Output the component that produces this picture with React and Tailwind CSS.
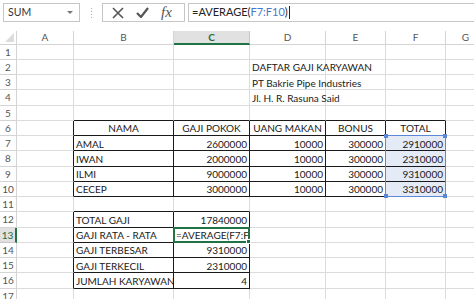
import React from "react";

const COLS = ["A", "B", "C", "D", "E", "F", "G"];
const COLW = [57, 100, 76, 76, 60, 60, 40];
const ROWH = 15.25;

const data = {
  "2-3": { t: "DAFTAR GAJI KARYAWAN" },
  "3-3": { t: "PT Bakrie Pipe Industries" },
  "4-3": { t: "Jl. H. R. Rasuna Said" },
  "6-1": { t: "NAMA", a: "c" },
  "6-2": { t: "GAJI POKOK", a: "c" },
  "6-3": { t: "UANG MAKAN", a: "c" },
  "6-4": { t: "BONUS", a: "c" },
  "6-5": { t: "TOTAL", a: "c" },
  "7-1": { t: "AMAL" }, "7-2": { t: "2600000", a: "r" }, "7-3": { t: "10000", a: "r" }, "7-4": { t: "300000", a: "r" }, "7-5": { t: "2910000", a: "r" },
  "8-1": { t: "IWAN" }, "8-2": { t: "2000000", a: "r" }, "8-3": { t: "10000", a: "r" }, "8-4": { t: "300000", a: "r" }, "8-5": { t: "2310000", a: "r" },
  "9-1": { t: "ILMI" }, "9-2": { t: "9000000", a: "r" }, "9-3": { t: "10000", a: "r" }, "9-4": { t: "300000", a: "r" }, "9-5": { t: "9310000", a: "r" },
  "10-1": { t: "CECEP" }, "10-2": { t: "3000000", a: "r" }, "10-3": { t: "10000", a: "r" }, "10-4": { t: "300000", a: "r" }, "10-5": { t: "3310000", a: "r" },
  "12-1": { t: "TOTAL GAJI" }, "12-2": { t: "17840000", a: "r" },
  "13-1": { t: "GAJI RATA - RATA" }, "13-2": { t: "=AVERAGE(F7:F", a: "l" },
  "14-1": { t: "GAJI TERBESAR" }, "14-2": { t: "9310000", a: "r" },
  "15-1": { t: "GAJI TERKECIL" }, "15-2": { t: "2310000", a: "r" },
  "16-1": { t: "JUMLAH KARYAWAN" }, "16-2": { t: "4", a: "r" },
};

function inTable(r, c) {
  if (r >= 6 && r <= 10 && c >= 1 && c <= 5) return true;
  if (r >= 12 && r <= 16 && c >= 1 && c <= 2) return true;
  return false;
}

const font = { fontFamily: "Lato, 'Open Sans', sans-serif" };

export default function App() {
  const rows = [];
  for (let r = 1; r <= 17; r++) rows.push(r);

  return (
    <div className="w-[474px] h-[299px] overflow-hidden bg-white relative text-[10px] text-[#222]" style={font}>
      {/* toolbar */}
      <div className="h-[31px] flex items-start pt-[3px] pl-[3px] bg-white">
        <div className="w-[77px] h-[19px] border border-[#c6c6c6] flex items-center justify-between pl-[4px] pr-[6px]">
          <span className="text-[10.5px] text-[#333]">SUM</span>
          <span className="w-0 h-0 border-l-[3px] border-r-[3px] border-t-[3px] border-l-transparent border-r-transparent border-t-[#777]" />
        </div>
        <div className="w-[22px] h-[19px] flex flex-col items-center justify-center gap-[2px]">
          <span className="w-[1px] h-[1px] bg-[#aaa]" />
          <span className="w-[1px] h-[1px] bg-[#aaa]" />
          <span className="w-[1px] h-[1px] bg-[#aaa]" />
          <span className="w-[1px] h-[1px] bg-[#aaa]" />
        </div>
        <div className="w-[83px] h-[19px] border border-[#c6c6c6] flex items-center pl-[9px] gap-[12px]">
          <svg width="12" height="12" viewBox="0 0 12 12">
            <path d="M1 1 L11 11 M11 1 L1 11" stroke="#555" strokeWidth="1.6" fill="none" />
          </svg>
          <svg width="13" height="11" viewBox="0 0 13 11">
            <path d="M1 6 L5 10 L12 1" stroke="#555" strokeWidth="2.2" fill="none" />
          </svg>
          <span className="text-[15px] italic text-[#555] leading-none" style={{ fontFamily: "'Liberation Serif', serif" }}>fx</span>
        </div>
        <div className="ml-[3px] flex-1 h-[19px] border border-[#c6c6c6] border-r-0 flex items-center pl-[3px]">
          <span className="text-[11px] text-[#222]">=AVERAGE(</span>
          <span className="text-[11px] text-[#4a78c8]">F7:F10</span>
          <span className="text-[11px] text-[#222]">)</span>
          <span className="w-[1px] h-[13px] bg-[#222] ml-[1px]" />
        </div>
      </div>

      {/* grid */}
      <div
        className="grid relative"
        style={{
          gridTemplateColumns: `17px ${COLW.map((w) => w + "px").join(" ")}`,
          gridTemplateRows: `13.5px repeat(17, ${ROWH}px)`,
        }}
      >
        {/* corner */}
        <div className="border-r border-b border-[#d4d4d4] bg-white relative">
          <svg className="absolute right-[2px] bottom-[2px]" width="9" height="9" viewBox="0 0 9 9"><path d="M9 0 L9 9 L0 9 Z" fill="#dcdcdc" /></svg>
        </div>
        {COLS.map((c) => (
          <div
            key={c}
            className={
              c === "C"
                ? "bg-[#e1e1e1] border-r border-[#c6c6c6] border-b-2 border-b-[#217346] text-[#1e6b41] font-bold flex items-center justify-center leading-none"
                : "bg-white border-r border-b border-[#d4d4d4] text-[#555] flex items-center justify-center leading-none"
            }
          >
            {c}
          </div>
        ))}
        {rows.map((r) => (
          <React.Fragment key={r}>
            <div
              className={
                r === 13
                  ? "bg-[#e1e1e1] border-r-2 border-r-[#217346] border-b border-[#c6c6c6] text-[#1e6b41] flex items-center justify-center leading-none"
                  : "bg-white border-r border-b border-[#d4d4d4] text-[#555] flex items-center justify-center leading-none"
              }
            >
              {r}
            </div>
            {COLS.map((c, col) => {
              const key = `${r}-${col}`;
              const d = data[key];
              const rightBlack = inTable(r, col) || inTable(r, col + 1);
              const bottomBlack = inTable(r, col) || inTable(r + 1, col);
              const sel = col === 5 && r >= 7 && r <= 10;
              const overflow = col === 3 && r >= 2 && r <= 4;
              const cls = [
                "border-r border-b flex items-center pl-[2px] pr-[2px] pt-[1px] leading-none whitespace-nowrap",
                rightBlack ? "border-r-[#1a1a1a]" : "border-r-[#dcdcdc]",
                bottomBlack ? "border-b-[#1a1a1a]" : "border-b-[#dcdcdc]",
                sel ? "bg-[#e4eaf6]" : "",
                overflow ? "overflow-visible relative z-10" : "overflow-hidden",
                d && d.a === "r" ? "justify-end" : d && d.a === "c" ? "justify-center" : "justify-start",
              ].join(" ");
              return (
                <div key={key} className={cls}>
                  {d ? <span className="text-[#1a1a1a]">{d.t}</span> : null}
                </div>
              );
            })}
          </React.Fragment>
        ))}

        {/* F7:F10 reference highlight */}
        <div
          className="absolute border border-[#5b87d6] pointer-events-none"
          style={{ left: 17 + 57 + 100 + 76 + 76 + 60 - 1, top: 13.5 + ROWH * 6 - 1, width: 61, height: ROWH * 4 + 1 }}
        >
          <span className="absolute -left-[2px] -top-[2px] w-[4px] h-[4px] bg-[#5b87d6]" />
          <span className="absolute -right-[2px] -top-[2px] w-[4px] h-[4px] bg-[#5b87d6]" />
          <span className="absolute -left-[2px] -bottom-[2px] w-[4px] h-[4px] bg-[#5b87d6]" />
          <span className="absolute -right-[2px] -bottom-[2px] w-[4px] h-[4px] bg-[#5b87d6]" />
        </div>

        {/* active cell C13 */}
        <div
          className="absolute border-2 border-[#217346] pointer-events-none"
          style={{ left: 17 + 57 + 100 - 1, top: 13.5 + ROWH * 12 - 1, width: 77, height: ROWH + 1 }}
        >
          <span className="absolute -right-[3px] -bottom-[3px] w-[5px] h-[5px] bg-[#217346] border border-white" />
        </div>
      </div>
    </div>
  );
}
